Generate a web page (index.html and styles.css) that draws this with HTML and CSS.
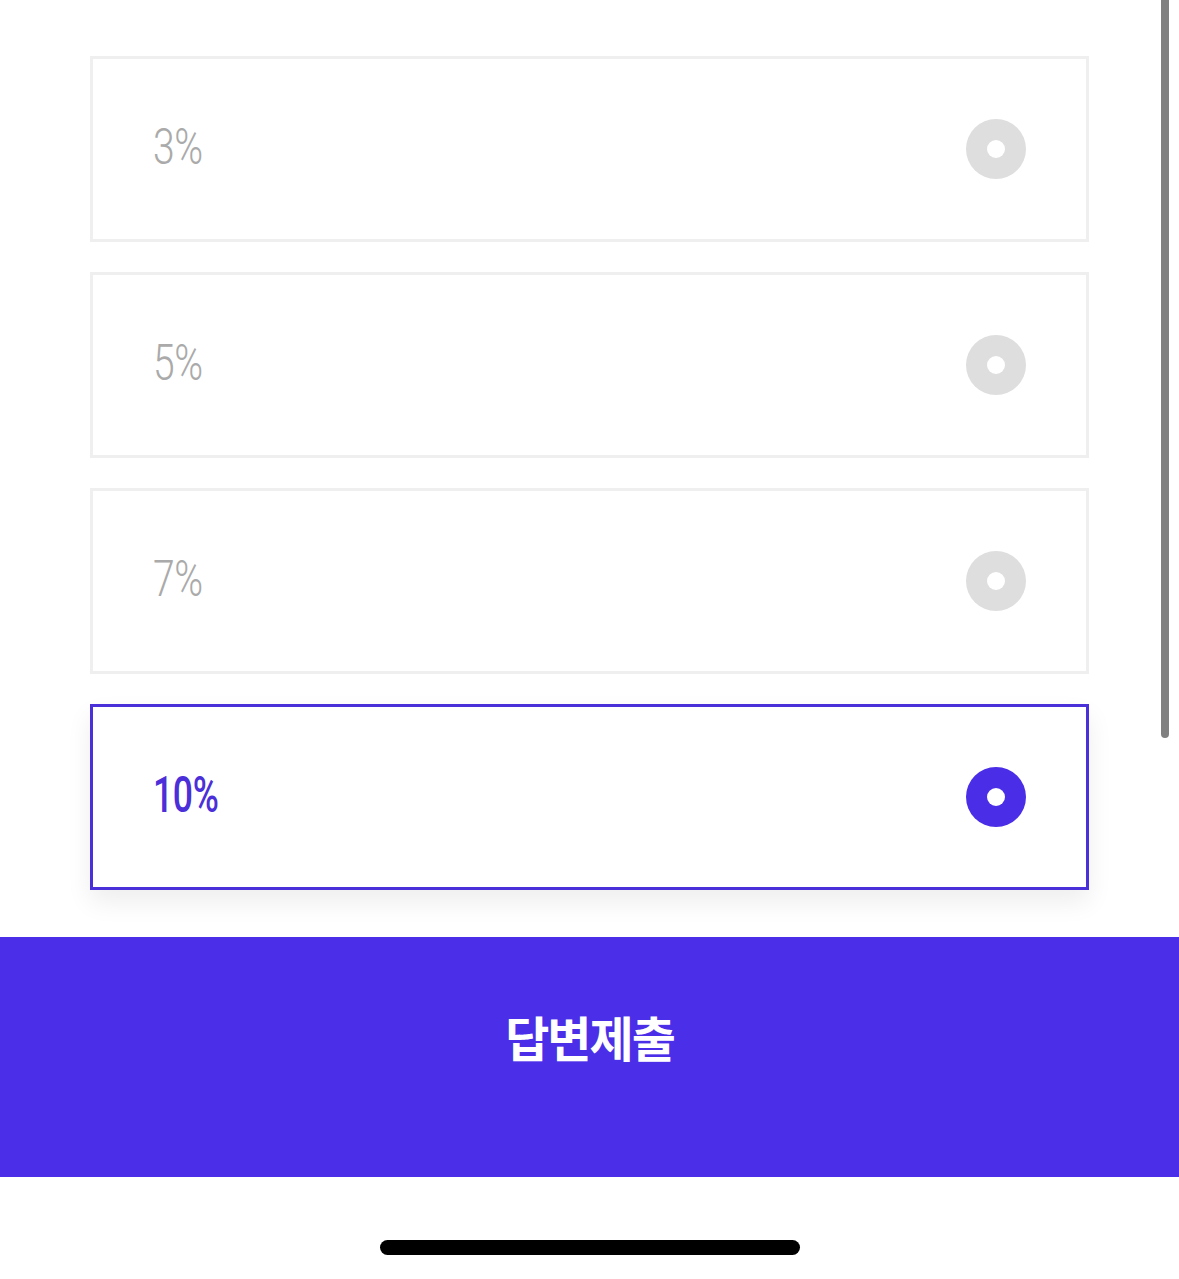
FILE: index.html
```html
<!DOCTYPE html>
<html lang="ko">
<head>
<meta charset="utf-8">
<title>답변제출</title>
<link rel="stylesheet" href="styles.css">
</head>
<body>
<div class="screen">
  <div class="options">
    <label class="option">
      <span class="label"><span class="num">3%</span></span>
      <span class="radio"><span class="dot"></span></span>
    </label>
    <label class="option">
      <span class="label"><span class="num">5%</span></span>
      <span class="radio"><span class="dot"></span></span>
    </label>
    <label class="option">
      <span class="label"><span class="num">7%</span></span>
      <span class="radio"><span class="dot"></span></span>
    </label>
    <label class="option selected">
      <span class="label"><span class="num">10%</span></span>
      <span class="radio"><span class="dot"></span></span>
    </label>
  </div>
  <button class="submit">답변제출</button>
  <div class="home-area"><div class="home-indicator"></div></div>
  <div class="scrollbar"></div>
</div>
</body>
</html>
```
FILE: styles.css
```css
* { box-sizing: border-box; }
html, body { margin: 0; padding: 0; background: #fff; }
body { font-family: Roboto, "Noto Sans", "Noto Sans CJK KR", sans-serif; }
.screen { position: relative; width: 1179px; height: 1279px; overflow: hidden; display: flex; flex-direction: column; }
.options { display: flex; flex-direction: column; gap: 30px; padding: 56px 90px 0 90px; width: 1179px; }
.option { display: flex; align-items: center; justify-content: space-between; height: 186px; width: 999px; border: 3px solid #efefef; background: #fff; padding: 0 60px 0 60px; }
.option.selected { border-color: #4a30d9; box-shadow: 0 12px 24px rgba(0,0,0,0.07); }
.label { display: inline-block; margin-top: -5px; }
.num { display: inline-block; font-family: Roboto, sans-serif; font-weight: 300; font-size: 50px; color: #aaaaaa; transform: scaleX(0.78); transform-origin: left center; letter-spacing: -0.5px; line-height: 1; }
.option.selected .num { color: #4b2fd8; font-weight: 500; transform: scaleX(0.71); }
.radio { width: 60px; height: 60px; border-radius: 50%; background: #dedede; display: flex; align-items: center; justify-content: center; }
.dot { width: 18px; height: 18px; border-radius: 50%; background: #fff; }
.option.selected .radio { background: #4a2de6; }
.submit { margin-top: 47px; height: 240px; width: 1179px; border: 0; background: #4b2ee8; color: #fff; font-family: "Noto Sans CJK KR", sans-serif; font-weight: 700; font-size: 48px; letter-spacing: -2px; padding: 0 0 42px 0; cursor: pointer; }
.home-area { flex: 1; display: flex; justify-content: center; padding-top: 63px; }
.home-indicator { width: 420px; height: 15px; border-radius: 8px; background: #000; }
.scrollbar { position: absolute; top: -8px; left: 1161px; width: 8px; height: 746px; border-radius: 4px; background: #808080; }
```
